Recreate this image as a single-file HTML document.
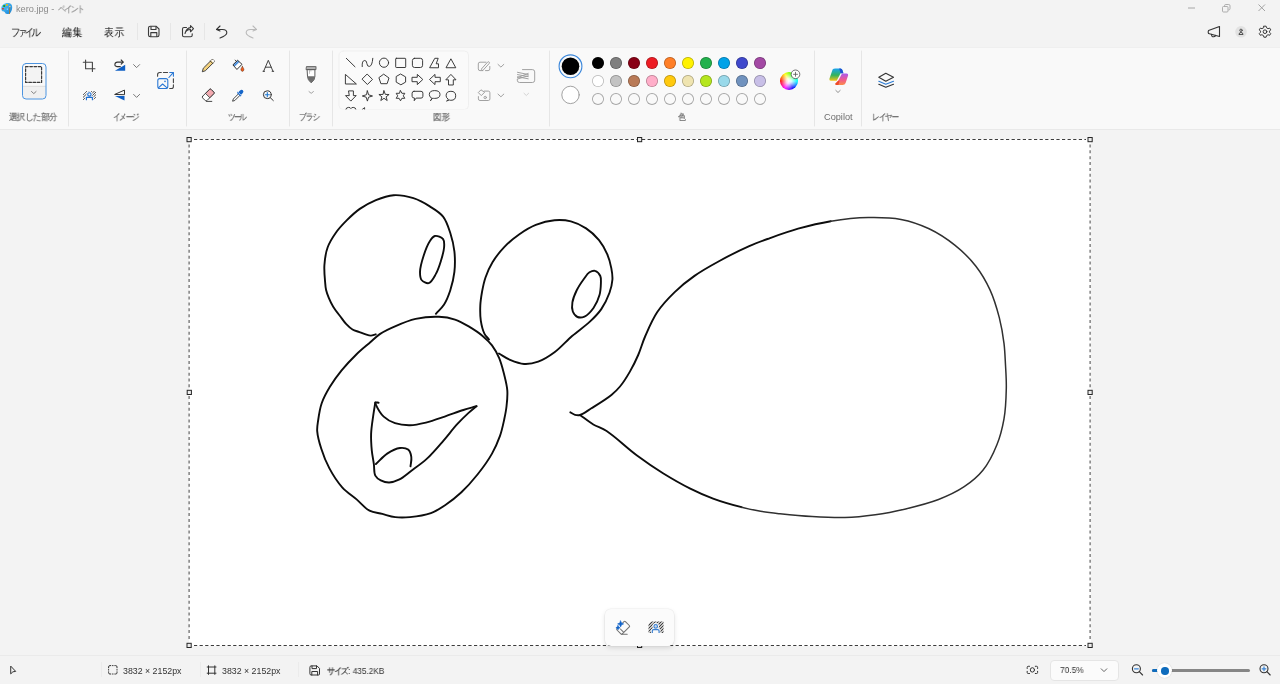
<!DOCTYPE html>
<html><head><meta charset="utf-8">
<style>
*{box-sizing:border-box}
html,body{margin:0;padding:0}
body{width:1280px;height:684px;overflow:hidden;position:relative;background:#f3f3f3;font-family:"Liberation Sans",sans-serif;color:#1b1b1b}
.a{position:absolute}
.t{position:absolute;white-space:nowrap;line-height:1;will-change:transform}
svg{position:absolute;overflow:visible}
#ribbon{position:absolute;left:0;top:47px;width:1280px;height:83px;background:#f9f9f9;border-top:1px solid #efefef;border-bottom:1px solid #e9e9e9}
.sep{position:absolute;width:1px;background:#ebebeb}
.lbl{position:absolute;white-space:nowrap;line-height:1;font-size:8.5px;color:#6e6e6e;will-change:transform}
.menu{position:absolute;white-space:nowrap;line-height:1;font-size:10.5px;color:#1f1f1f}
.sw{position:absolute;width:12px;height:12px;border-radius:50%;box-shadow:inset 0 0 0 0.8px rgba(0,0,0,.28)}
.stxt{position:absolute;white-space:nowrap;line-height:1;font-size:8.8px;color:#333;will-change:transform}
</style></head><body>

<!-- title bar -->
<svg style="left:0;top:0" width="16" height="16" viewBox="0 0 16 16">
  <defs><linearGradient id="pal" x1="0" y1="0" x2="1" y2="1"><stop offset="0" stop-color="#5ccaf7"/><stop offset="1" stop-color="#1583dc"/></linearGradient></defs>
  <path d="M1.3,9 C1,5.3 4,2.9 7.8,2.9 C11,2.9 12.3,5 12.2,7.5 C12.1,10 11.2,11.8 10.2,13 C9.2,14.1 7.6,14.1 6.2,13.8 C5,13.5 5.3,12.3 4.6,11.9 C3.6,11.4 1.6,11.6 1.3,9Z" fill="url(#pal)"/>
  <rect x="3.2" y="5" width="1.9" height="1.9" rx="0.5" fill="#1f9a2a"/>
  <rect x="6" y="3.9" width="1.8" height="1.8" rx="0.5" fill="#f5b800"/>
  <rect x="2" y="7.9" width="1.9" height="1.7" rx="0.5" fill="#d9381e"/>
  <circle cx="7.3" cy="9.1" r="0.7" fill="#cfe9fb"/>
  <path d="M9.75,7.2 L9.5,14" stroke="#a8772f" stroke-width="0.9"/>
  <ellipse cx="9.8" cy="6.6" rx="0.9" ry="0.6" fill="#f2c48a"/>
</svg>

<div class="t" style="left:16px;top:5px;font-size:9.2px;color:#8b8b8b">kero.jpg -</div>
<!-- window controls -->
<svg style="left:1186px;top:4px" width="10" height="8"><path d="M2,4 H9" stroke="#a6a6a6" stroke-width="1"/></svg>
<svg style="left:1222px;top:4px" width="10" height="9"><rect x="0.5" y="2.5" width="5.5" height="5.5" rx="1" fill="none" stroke="#a6a6a6" stroke-width="0.9"/><path d="M2.5,2.5 V1.8 Q2.5,0.5 3.8,0.5 H6.7 Q8,0.5 8,1.8 V4.6 Q8,6 6.5,6" fill="none" stroke="#a6a6a6" stroke-width="0.9"/></svg>
<svg style="left:1258px;top:4px" width="8" height="8"><path d="M0.5,0.5 L7,7 M7,0.5 L0.5,7" stroke="#9a9a9a" stroke-width="0.9"/></svg>

<!-- menu bar -->
<div class="sep" style="left:137px;top:23px;height:17px;background:#e6e6e6"></div>
<div class="sep" style="left:170px;top:23px;height:17px;background:#e6e6e6"></div>
<div class="sep" style="left:204px;top:23px;height:17px;background:#e6e6e6"></div>

<div id="ribbon"></div>


<!-- ribbon icons overlay -->
<svg style="left:0;top:0" width="1280" height="684" fill="none" stroke-linecap="round" stroke-linejoin="round">
  <!-- separators -->
  <g stroke="#e6e6e6" stroke-width="1">
    <path d="M68.5,51 V126"/><path d="M186.5,51 V126"/><path d="M289.5,51 V126"/><path d="M332.5,51 V126"/>
    <path d="M549.5,51 V126"/><path d="M814.5,51 V126"/><path d="M861.5,51 V126"/>
  </g>
  <!-- toolbar: save -->
  <g stroke="#3a3a3a" stroke-width="1.1">
    <path d="M148.5,28 Q148.5,26.2 150.3,26.2 H156 L159,29 V35 Q159,36.7 157.3,36.7 H150.3 Q148.5,36.7 148.5,35Z"/>
    <path d="M151,26.5 V29.5 H156 V26.5"/>
    <path d="M150.8,36.5 V32.6 H156.8 V36.5"/>
  </g>
  <!-- share -->
  <g stroke="#3a3a3a" stroke-width="1.1">
    <path d="M186.5,27.5 H184 Q182.5,27.5 182.5,29 V35.2 Q182.5,36.7 184,36.7 H190.7 Q192.2,36.7 192.2,35.2 V33.8"/>
    <path d="M185,33.5 Q186,29.5 190.5,29.5 V31.8 L193.5,28.6 L190.5,25.6 V27.6 Q186.5,27.8 185,33.5Z"/>
  </g>
  <!-- undo -->
  <g stroke="#333" stroke-width="1.1">
    <path d="M216.5,29.5 L220,26 M216.5,29.5 L220,31"/>
    <path d="M216.8,29.5 H222.5 Q227,29.5 226.8,33 Q226.5,35.5 220,38"/>
  </g>
  <!-- redo -->
  <g stroke="#b9b9b9" stroke-width="1.1">
    <path d="M256.5,29.5 L253,26 M256.5,29.5 L253,31"/>
    <path d="M256.2,29.5 H250.5 Q246,29.5 246.2,33 Q246.5,35.5 253,38"/>
  </g>
  <!-- title right icons -->
  <g stroke="#333" stroke-width="1.1">
    <path d="M1208.5,30.5 L1219.5,26.5 V36.5 L1208.5,33.5 Q1207.8,31.8 1208.5,30.5Z"/>
    <path d="M1211.5,34.3 Q1211.5,37 1213.8,36.8 Q1215.6,36.6 1215.5,35.3"/>
  </g>
  <circle cx="1241" cy="31.8" r="5.8" fill="#e2e2e2"/>
  <g stroke="#444" stroke-width="0.9"><circle cx="1241" cy="30.3" r="1.2"/><path d="M1239,34.1 Q1239.2,32.4 1241,32.4 Q1242.8,32.4 1243,34.1Z"/></g>
  <g stroke="#333" stroke-width="1.05" transform="translate(1265,31.7) scale(0.92)">
    <path d="M-1.2,-6 H1.2 L1.7,-4.2 L3.3,-3.3 L5.1,-3.9 L6.2,-2 L4.9,-0.6 V0.6 L6.2,2 L5.1,3.9 L3.3,3.3 L1.7,4.2 L1.2,6 H-1.2 L-1.7,4.2 L-3.3,3.3 L-5.1,3.9 L-6.2,2 L-4.9,0.6 V-0.6 L-6.2,-2 L-5.1,-3.9 L-3.3,-3.3 L-1.7,-4.2Z"/>
    <circle r="2"/>
  </g>

  <!-- selection button -->
  <rect x="22.5" y="63.5" width="23.5" height="35.5" rx="3.5" fill="#f9f9f9"/>
  <path d="M23,86.5 H45.5 V95 Q45.5,98.5 42,98.5 H26.5 Q23,98.5 23,95Z" fill="#f0f0f0"/>
  <path d="M23,86.3 H45.5" stroke="#d6d6d6" stroke-width="0.8"/>
  <rect x="25.6" y="66.6" width="16" height="15.8" fill="#f3f3f3" stroke="#3a3a3a" stroke-width="1.2" stroke-dasharray="2.6 1.6"/>
  <path d="M31.5,91.5 L33.8,93.6 L36.1,91.5" stroke="#666" stroke-width="0.8"/>
  <rect x="22.5" y="63.5" width="23.5" height="35.5" rx="3.5" stroke="#4b93df" stroke-width="1"/>

  <!-- crop -->
  <g stroke="#444" stroke-width="1.1">
    <path d="M85.6,60 V68.8 H95"/><path d="M83.3,62.2 H92.4 V71.5"/>
  </g>
  <!-- rotate -->
  <path d="M114.9,70.8 L125.2,64.8 V70.8Z" fill="#0f5fc4"/>
  <g stroke="#333" stroke-width="1.1">
    <path d="M120.3,66.6 H117 Q114.7,66.4 114.9,64.2 Q115.1,62.1 117.5,62.1 H123"/>
    <path d="M121.2,60 L123.2,62.1 L121.2,64.2"/>
  </g>
  <path d="M133.6,64.6 L136.6,67.6 L139.6,64.6" stroke="#6a6a6a" stroke-width="0.9"/>
  <!-- remove background -->
  <defs><clipPath id="rbc"><rect x="83" y="91" width="13" height="9"/></clipPath><clipPath id="rbc2"><rect x="648.5" y="621.5" width="15" height="11.5"/></clipPath></defs>
  <g clip-path="url(#rbc)" stroke="#4a4a4a" stroke-width="0.95" stroke-dasharray="1.1 0.5">
    <path d="M80,98 L89,89 M80,100.5 L91.5,89 M80,103 L94,89 M82.5,103 L96.5,89 M85,103 L99,89 M87.5,103 L101.5,89 M90,103 L104,89"/>
  </g>
  <g stroke="#f9f9f9" stroke-width="2.6" stroke-linecap="butt"><circle cx="89.4" cy="94.4" r="1.8"/><path d="M86.4,100.5 V97.4 H92.4 V100.5"/></g>
  <path d="M87,100 V98 H91.8 V100Z" fill="#f9f9f9"/>
  <g stroke="#1f6fd0" stroke-width="1.1" stroke-linecap="butt"><circle cx="89.4" cy="94.4" r="1.7"/><path d="M86.4,100.2 V97.4 H92.4 V100.2"/></g>
  <!-- flip -->
  <path d="M115,94.3 L124.5,90.1 V94.3Z" stroke="#333" stroke-width="1"/>
  <path d="M115,95.9 H124.5 V100.6Z" fill="#0f5fc4"/>
  <path d="M133.6,94.4 L136.6,97.4 L139.6,94.4" stroke="#6a6a6a" stroke-width="0.9"/>
  <!-- resize -->
  <rect x="157.8" y="78.6" width="10" height="9.9" rx="2" stroke="#2b78d4" stroke-width="1.1"/>
  <path d="M158.6,87.6 L162.6,84 L166.5,87.3" stroke="#2b78d4" stroke-width="1.1"/>
  <circle cx="165" cy="81.4" r="0.8" fill="#2b78d4"/>
  <g stroke="#444" stroke-width="1.1">
    <path d="M157.6,76.3 V74.6 Q157.6,72.5 159.7,72.5 H161.3"/><path d="M163.4,72.5 H167.6"/>
    <path d="M173.4,78.8 V82.6"/><path d="M173.4,84.7 V86.4 Q173.4,88.5 171.3,88.5 H169.7"/>
  </g>
  <g stroke="#2b78d4" stroke-width="1.1"><path d="M168.9,77.5 L173.2,72.7"/><path d="M169.7,72.5 H173.4 V76.2"/></g>

  <!-- pencil -->
  <g stroke="#333" stroke-width="0.9">
    <path d="M202.4,71.4 L203.3,68.2 L211.5,60 Q212.6,59 213.7,60.1 Q214.8,61.2 213.8,62.3 L205.6,70.5Z" fill="#f4d27e"/>
    <path d="M210.4,61.1 L212.7,63.4"/>
  </g>
  <path d="M211,60.5 Q212.6,59 213.7,60.1 Q214.8,61.2 213.3,62.8Z" fill="#fff"/>
  <!-- fill bucket -->
  <path d="M233.2,64.6 L237.6,60.3 L242,64.3 L237.2,69.2Z" fill="#fff"/>
  <path d="M233.2,64.6 L237.6,60.3 L239.5,62 L234.9,66.5Z" fill="#3f86d8"/>
  <path d="M234.4,64.6 L237.8,61.3 M235.6,65.4 L238.6,62.4" stroke="#a9cdf3" stroke-width="0.5" stroke-dasharray="0.8 0.6"/>
  <path d="M233.2,64.6 L237.6,60.3 L242,64.3 L237.2,69.2Z" stroke="#2a2a2a" stroke-width="0.95"/>
  <path d="M235.2,60.1 L236.3,61.3" stroke="#2a2a2a" stroke-width="0.9"/>
  <path d="M242.4,66.4 Q244,68.6 243.9,69.6 Q243.7,71.4 242.4,71.4 Q241.1,71.4 240.9,69.6 Q240.8,68.6 242.4,66.4Z" fill="#f05a1a" stroke="#5a2a10" stroke-width="0.5"/>
  <!-- text A -->
  <g stroke="#2e2e2e" stroke-width="0.9">
    <path d="M263.7,71.1 L268.3,60.3 L272.9,71.1"/><path d="M265.5,67.2 H271.1"/>
    <path d="M263,71.3 H264.6 M272.1,71.3 H273.7"/>
  </g>
  <!-- eraser -->
  <g stroke="#333" stroke-width="0.9">
    <path d="M202.6,96.3 L209.5,89.4 Q210.3,88.6 211.1,89.4 L213.8,92.1 Q214.6,92.9 213.8,93.7 L206.9,100.6 Q206.1,101.4 205.3,100.6 L202.6,97.9 Q201.8,97.1 202.6,96.3Z" fill="#fff"/>
    <path d="M205.8,93.1 L209.5,89.4 Q210.3,88.6 211.1,89.4 L213.8,92.1 Q214.6,92.9 213.8,93.7 L210.1,97.4Z" fill="#f3aab0"/>
    <path d="M206.5,101.4 H211.8"/>
  </g>
  <!-- color picker -->
  <g stroke="#333" stroke-width="0.9">
    <path d="M238.6,93.7 L233.3,99 L232.6,101.2 L234.8,100.5 L240.1,95.2" fill="#fff"/>
  </g>
  <path d="M237.2,93.2 L240.6,96.6 L241.6,95.6 L240.9,94.9 L242.6,93.2 Q244.2,91.6 242.9,90.3 Q241.6,89 240,90.6 L238.3,92.3 L237.6,91.6 Z" fill="#1565c8"/>
  <path d="M238.6,92.8 L241.1,95.3" stroke="#fff" stroke-width="0.7"/>
  <!-- zoom -->
  <g stroke="#333" stroke-width="1">
    <circle cx="267.3" cy="94.7" r="3.9"/><path d="M270.2,97.6 L273.3,100.6"/>
  </g>
  <path d="M267.3,92.6 V96.8 M265.2,94.7 H269.4" stroke="#1f78d1" stroke-width="1.1"/>
  <!-- brush -->
  <path d="M307.5,69.6 H314.9 V76.5 Q314.9,80 311.2,82.8 Q307.5,80 307.5,76.5Z" fill="#fff" stroke="#4a4a4a" stroke-width="0.9"/>
  <path d="M307.5,76.2 H314.9 V76.8 Q314.9,80 311.2,82.8 Q307.5,80 307.5,76.8Z" fill="#6e6e6e"/>
  <path d="M306.4,66.5 Q306.4,66.2 306.8,66.6 H315.6 Q316,66.2 316,66.5 V69.6 H306.4Z" fill="#b5b5b5" stroke="#4a4a4a" stroke-width="0.8"/>
  <path d="M309.5,70.6 V73.4 M309.5,70.8 H311.2" stroke="#9a9a9a" stroke-width="0.6"/>
  <path d="M309,91.6 L311.2,93.3 L313.4,91.6" stroke="#8a8a8a" stroke-width="0.8"/>

  <!-- shapes panel -->
  <rect x="339" y="51" width="129.5" height="58.5" rx="4" fill="#fafafa" stroke="#efefef" stroke-width="1"/>
  <g stroke="#333" stroke-width="0.95">
    <path d="M346.3,58.3 L355,66.8"/>
    <path d="M362.2,66.6 Q361.8,60.5 364.7,60.5 Q366.7,60.5 366.9,63.6 Q367.2,66.7 369.4,66.4 Q372.2,66 372.8,58.3"/>
    <circle cx="384" cy="62.7" r="4.6"/>
    <rect x="395.7" y="58.3" width="10" height="9.2" rx="0.6"/>
    <rect x="412.4" y="58.3" width="10.2" height="9.2" rx="2.2"/>
    <path d="M429.8,67.4 L434.8,58.3 H438.2 L436.2,63.8 H438.5 V67.4Z"/>
    <path d="M446.2,67.4 L450.9,58.8 L455.6,67.4Z"/>
    <path d="M345.4,74.8 V84 H356Z"/>
    <path d="M367.4,74.3 L372.5,79.4 L367.4,84.5 L362.3,79.4Z"/>
    <path d="M384,74.4 L389,78 L387.1,83.7 H380.9 L379,78Z"/>
    <path d="M400.9,74.2 L405.6,76.9 V82.1 L400.9,84.8 L396.2,82.1 V76.9Z"/>
    <path d="M412.4,77.3 H417.3 V74.4 L422.8,79.5 L417.3,84.6 V81.7 H412.4Z"/>
    <path d="M439.9,77.3 H435 V74.4 L429.5,79.5 L435,84.6 V81.7 H439.9Z"/>
    <path d="M448.5,84.6 V79.8 H445.8 L450.9,74.4 L456,79.8 H453.3 V84.6Z"/>
    <path d="M348.9,90.9 H353.4 V95.6 H356.2 L350.8,101.1 L345.5,95.6 H348.9Z"/>
    <path d="M367.4,90.9 L368.6,94.8 L372.5,96 L368.6,97.2 L367.4,101.1 L366.2,97.2 L362.3,96 L366.2,94.8Z"/>
    <path d="M384,90.8 L385.3,94.4 L389.1,94.5 L386.1,96.8 L387.2,100.5 L384,98.3 L380.8,100.5 L381.9,96.8 L378.9,94.5 L382.7,94.4Z"/>
    <path d="M400.5,90.7 L401.9,93.3 L404.8,93.3 L403.3,95.8 L404.8,98.3 L401.9,98.3 L400.5,100.8 L399.1,98.3 L396.2,98.3 L397.7,95.8 L396.2,93.3 L399.1,93.3Z"/>
    <path d="M414,91.3 H421 Q422.9,91.3 422.9,93.2 V96.3 Q422.9,98.1 421,98.1 H416.2 L414.2,100.7 L414.6,98.1 Q412.1,98.1 412.1,96.3 V93.2 Q412.1,91.3 414,91.3Z"/>
    <path d="M431.6,98.2 Q429.3,97 429.3,94.6 Q429.3,90.6 434.7,90.6 Q440,90.6 440,94.5 Q440,98.4 434.7,98.4 Q433.4,98.4 432.6,98.2 L430.7,100.5Z"/>
    <path d="M448.1,99.2 Q446.1,97.8 446.1,95.8 Q446.1,91.3 450.9,91.3 Q455.7,91.3 455.7,95.8 Q455.7,100.3 450.9,100.3 Q450,100.3 449.3,100 L446.9,100.9Z"/>
    <path d="M345.8,109.5 Q346,107.4 348.6,107.4 Q350.4,107.4 350.9,108.6 Q351.4,107.4 353.2,107.4 Q355.8,107.4 356,109.5"/>
    <path d="M362.2,109.5 L364.6,107.6 V109.5"/>
  </g>
  <rect x="339" y="109.5" width="129.5" height="2" fill="#f9f9f9"/>
  <!-- shape outline/fill/size -->
  <g stroke="#9c9c9c" stroke-width="0.95">
    <path d="M486,62.2 H480 Q478.3,62.2 478.3,63.9 V68.9 Q478.3,70.6 480,70.6 H482.8"/>
    <path d="M482.9,70.4 L489.1,63.6 Q489.9,62.7 489.1,62 Q488.4,61.3 487.5,62.2 L481.6,68.8 Z"/>
    <path d="M489.8,66.5 V68.9 Q489.8,70.6 488.1,70.6 H485.5"/>
    <path d="M498,64.4 L500.9,67.1 L503.8,64.4"/>
    <path d="M484.2,91.1 H488.3 Q489.9,91.1 489.9,92.7 V98.9 Q489.9,100.5 488.3,100.5 H480 Q478.4,100.5 478.4,98.9 V96.6"/>
    <path d="M480.7,90.1 L478.3,92.6 L481.3,95.6 L484.3,92.6Z"/>
    <circle cx="485.2" cy="97.5" r="1.2"/>
    <path d="M498,94.1 L500.9,96.8 L503.8,94.1"/>
    <path d="M522.5,69.6 H532.4 Q534.7,69.6 534.7,71.9 V80.2 Q534.7,82.5 532.4,82.5 H519.6 Q517.3,82.5 517.3,80.2 V79.5"/>
    <path d="M517.5,72.3 L528.2,74.5 M517.5,74.6 L528.2,76.6 M517.5,76.8 L528.2,78.8 M517.5,77.6 L528.2,73.4 M517.5,79 L528.2,75.8"/>
  </g>
  <path d="M524,93.3 L526.3,95.5 L528.6,93.3" stroke="#cfcfcf" stroke-width="0.9"/>

  <!-- current colors -->
  <circle cx="570.5" cy="66.3" r="11.4" stroke="#3b87db" stroke-width="1.1"/>
  <circle cx="570.5" cy="66.3" r="8.8" fill="#000"/>
  <circle cx="570.5" cy="94.9" r="8.7" fill="#fff" stroke="#8a8a8a" stroke-width="0.8"/>

  <!-- layers -->
  <g stroke="#333" stroke-width="1.1">
    <path d="M878.8,77.3 L885.8,73.3 L893.5,77.3 L885.8,81.3Z"/>
    <path d="M878.8,84.2 L885.8,87.3 L893.5,84.2"/>
  </g>
  <path d="M878.8,81.3 L885.8,84.3 L893.5,81.3" stroke="#2b7cd6" stroke-width="1.1"/>
  <path d="M835.8,90.4 L838,92.5 L840.2,90.4" stroke="#777" stroke-width="0.8"/>
</svg>


<!-- ribbon labels -->
<div class="lbl" style="left:823.5px;top:112.5px;font-size:9.2px">Copilot</div>
<!-- palette -->
<div class="sw" style="left:591.6px;top:56.5px;background:#000000"></div>
<div class="sw" style="left:591.6px;top:74.5px;background:#ffffff"></div>
<div class="sw" style="left:591.6px;top:92.5px;background:transparent;box-shadow:inset 0 0 0 0.9px #a8a8a8"></div>
<div class="sw" style="left:609.6px;top:56.5px;background:#7f7f7f"></div>
<div class="sw" style="left:609.6px;top:74.5px;background:#c3c3c3"></div>
<div class="sw" style="left:609.6px;top:92.5px;background:transparent;box-shadow:inset 0 0 0 0.9px #a8a8a8"></div>
<div class="sw" style="left:627.6px;top:56.5px;background:#880015"></div>
<div class="sw" style="left:627.6px;top:74.5px;background:#b97a57"></div>
<div class="sw" style="left:627.6px;top:92.5px;background:transparent;box-shadow:inset 0 0 0 0.9px #a8a8a8"></div>
<div class="sw" style="left:645.6px;top:56.5px;background:#ed1c24"></div>
<div class="sw" style="left:645.6px;top:74.5px;background:#ffaec9"></div>
<div class="sw" style="left:645.6px;top:92.5px;background:transparent;box-shadow:inset 0 0 0 0.9px #a8a8a8"></div>
<div class="sw" style="left:663.6px;top:56.5px;background:#ff7f27"></div>
<div class="sw" style="left:663.6px;top:74.5px;background:#ffc90e"></div>
<div class="sw" style="left:663.6px;top:92.5px;background:transparent;box-shadow:inset 0 0 0 0.9px #a8a8a8"></div>
<div class="sw" style="left:681.6px;top:56.5px;background:#fff200"></div>
<div class="sw" style="left:681.6px;top:74.5px;background:#efe4b0"></div>
<div class="sw" style="left:681.6px;top:92.5px;background:transparent;box-shadow:inset 0 0 0 0.9px #a8a8a8"></div>
<div class="sw" style="left:699.6px;top:56.5px;background:#22b14c"></div>
<div class="sw" style="left:699.6px;top:74.5px;background:#b5e61d"></div>
<div class="sw" style="left:699.6px;top:92.5px;background:transparent;box-shadow:inset 0 0 0 0.9px #a8a8a8"></div>
<div class="sw" style="left:717.6px;top:56.5px;background:#00a2e8"></div>
<div class="sw" style="left:717.6px;top:74.5px;background:#99d9ea"></div>
<div class="sw" style="left:717.6px;top:92.5px;background:transparent;box-shadow:inset 0 0 0 0.9px #a8a8a8"></div>
<div class="sw" style="left:735.6px;top:56.5px;background:#3f48cc"></div>
<div class="sw" style="left:735.6px;top:74.5px;background:#7092be"></div>
<div class="sw" style="left:735.6px;top:92.5px;background:transparent;box-shadow:inset 0 0 0 0.9px #a8a8a8"></div>
<div class="sw" style="left:753.6px;top:56.5px;background:#a349a4"></div>
<div class="sw" style="left:753.6px;top:74.5px;background:#c8bfe7"></div>
<div class="sw" style="left:753.6px;top:92.5px;background:transparent;box-shadow:inset 0 0 0 0.9px #a8a8a8"></div>
<div class="a" style="left:779.8px;top:72.3px;width:18px;height:18px;border-radius:50%;background:conic-gradient(from 30deg,#00ff00,#00ffff 60deg,#0000ff 120deg,#ff00ff 180deg,#ff0000 240deg,#ffff00 300deg,#00ff00 360deg)"></div>
<div class="a" style="left:779.8px;top:72.3px;width:18px;height:18px;border-radius:50%;background:radial-gradient(circle,#fff 0%,rgba(255,255,255,.85) 20%,rgba(255,255,255,0) 70%)"></div>
<svg style="left:790px;top:69px" width="12" height="12"><circle cx="5.5" cy="5.3" r="4.3" fill="#fff" stroke="#5a5a5a" stroke-width="0.85"/><path d="M5.5,2.9 V7.7 M3.1,5.3 H7.9" stroke="#555" stroke-width="0.8"/></svg>
<!-- copilot -->
<svg style="left:828.5px;top:67.5px" width="20" height="18" viewBox="0 0 20 18">
  <defs>
    <linearGradient id="cpA" x1="0" y1="0" x2="0" y2="1"><stop offset="0" stop-color="#19a4f2"/><stop offset=".55" stop-color="#34b35c"/><stop offset="1" stop-color="#f4c517"/></linearGradient>
    <linearGradient id="cpB" x1="0" y1="0" x2="0" y2="1"><stop offset="0" stop-color="#a85af0"/><stop offset=".55" stop-color="#f05a8e"/><stop offset="1" stop-color="#fc8c48"/></linearGradient>
  </defs>
  <path d="M3.6,1.6 Q4.4,0.4 6.4,0.4 H11.4 Q12.9,0.4 13.4,1.9 L14.4,5.2 H11.6 L7.7,12.8 H1.8 Q0,12.8 0.4,10.8 Z" fill="url(#cpA)"/>
  <path d="M10.2,0.4 H11.4 Q12.9,0.4 13.4,1.9 L14.4,5.2 H11.6Z" fill="#1d4fd2"/>
  <path d="M13,5.4 H17.6 Q19.6,5.4 19.1,7.6 L16.6,15 Q15.9,17 13.6,17 H7.6 Q6,17 6.5,15.4 L9.2,12.8 Z" fill="url(#cpB)"/>
  <path d="M9.2,12.8 H10.6 L9.4,17 H7.6 Q6,17 6.5,15.4 Z" fill="#ee4a2a"/>
</svg>

<div class="t" style="left:57.80px;top:5px;font-size:9.2px;color:#8b8b8b;-webkit-text-stroke:0.1px #8b8b8b;letter-spacing:-1.84px;transform:scaleX(0.9);transform-origin:0 0">ペイント</div>
<div class="t" style="left:10.60px;top:27px;font-size:10.5px;color:#1f1f1f;-webkit-text-stroke:0.08px #1f1f1f;letter-spacing:-3.06px;transform:scaleX(0.85);transform-origin:0 0">ファイル</div>
<div class="t" style="left:62.00px;top:27px;font-size:10.5px;color:#1f1f1f;-webkit-text-stroke:0.08px #1f1f1f;letter-spacing:0.57px;transform:scaleX(0.88);transform-origin:0 0">編集</div>
<div class="t" style="left:104.00px;top:27px;font-size:10.5px;color:#1f1f1f;-webkit-text-stroke:0.08px #1f1f1f;letter-spacing:1.14px;transform:scaleX(0.88);transform-origin:0 0">表示</div>
<div class="t" style="left:9.20px;top:113px;font-size:8.8px;color:#6a6a6a;-webkit-text-stroke:0.2px #6a6a6a;letter-spacing:-0.59px;transform:scaleX(0.95);transform-origin:0 0">選択した部分</div>
<div class="t" style="left:113.40px;top:113px;font-size:8.8px;color:#6a6a6a;-webkit-text-stroke:0.2px #6a6a6a;letter-spacing:-1.57px;transform:scaleX(0.85);transform-origin:0 0">イメージ</div>
<div class="t" style="left:228.20px;top:113px;font-size:8.8px;color:#6a6a6a;-webkit-text-stroke:0.2px #6a6a6a;letter-spacing:-2.35px;transform:scaleX(0.85);transform-origin:0 0">ツール</div>
<div class="t" style="left:299.40px;top:113px;font-size:8.8px;color:#6a6a6a;-webkit-text-stroke:0.2px #6a6a6a;letter-spacing:-1.06px;transform:scaleX(0.85);transform-origin:0 0">ブラシ</div>
<div class="t" style="left:433.00px;top:113px;font-size:8.8px;color:#6a6a6a;-webkit-text-stroke:0.2px #6a6a6a;letter-spacing:0.00px;transform:scaleX(0.95);transform-origin:0 0">図形</div>
<div class="t" style="left:677.60px;top:113px;font-size:8.8px;color:#6a6a6a;-webkit-text-stroke:0.2px #6a6a6a;letter-spacing:0.00px;transform:scaleX(0.86);transform-origin:0 0">色</div>
<div class="t" style="left:872.00px;top:113px;font-size:8.8px;color:#6a6a6a;-webkit-text-stroke:0.2px #6a6a6a;letter-spacing:-1.37px;transform:scaleX(0.85);transform-origin:0 0">レイヤー</div>
<div class="t" style="left:327.40px;top:667px;font-size:8.8px;color:#333;-webkit-text-stroke:0.15px #333;letter-spacing:-1.39px;transform:scaleX(0.9);transform-origin:0 0">サイズ</div>
<!-- canvas -->
<div class="a" style="left:189px;top:139px;width:902px;height:507px;background:#fff"></div>
<svg style="left:0;top:0" width="1280" height="684">
  <g fill="none" stroke="#0d0d0d" stroke-width="1.9" stroke-linecap="round" stroke-linejoin="round">
<path d="M375.7,334.3 C374.1,334.7 372.5,335.6 370.9,335.6 C369.4,335.6 368.1,335.2 366.5,334.7 C364.4,334.1 361.8,333.0 359.5,332.1 C357.2,331.2 354.7,330.8 352.5,329.5 C350.2,328.2 348.3,326.3 346.3,324.2 C344.1,321.9 342.3,319.1 340.2,316.3 C337.9,313.3 335.2,309.9 333.2,306.7 C331.4,303.8 330.0,300.8 328.8,297.9 C327.7,295.2 326.7,292.6 326.1,290.0 C325.5,287.6 325.4,285.8 325.2,282.9 C324.8,278.3 324.0,271.1 324.4,265.2 C324.8,259.3 325.6,253.0 327.6,247.5 C329.5,242.3 332.5,237.5 335.7,233.0 C338.9,228.4 342.9,224.2 346.9,220.2 C350.9,216.2 355.1,212.2 359.8,208.9 C364.7,205.5 370.3,202.4 375.9,200.1 C381.5,197.8 387.5,195.6 393.6,195.2 C400.0,194.8 407.3,196.3 413.4,198.2 C419.3,200.1 424.8,203.2 429.8,206.4 C434.6,209.4 439.7,212.3 443.1,216.6 C446.6,221.1 448.4,227.3 450.3,233.0 C452.2,238.9 453.7,245.1 454.4,251.4 C455.1,258.0 455.1,265.3 454.4,271.9 C453.7,278.2 452.1,284.6 450.3,290.3 C448.6,295.5 446.7,300.5 444.1,304.6 C441.8,308.2 438.6,310.7 435.9,313.8"/>
<path d="M434.9,236.0 C437.2,235.5 441.6,237.2 443.1,239.1 C444.6,241.0 444.3,244.3 444.1,247.3 C443.9,251.2 442.3,256.2 441.0,260.6 C439.6,265.1 438.1,270.0 435.9,273.9 C433.9,277.4 431.5,282.4 428.8,283.1 C426.6,283.7 423.1,281.8 421.6,280.0 C420.1,278.1 420.0,275.1 420.0,271.9 C420.1,267.4 422.0,260.7 423.7,255.5 C425.3,250.5 427.5,244.6 429.8,241.2 C431.4,238.8 432.8,236.5 434.9,236.0Z"/>
<path d="M489.0,339.5 C487.5,337.5 485.7,336.1 484.4,333.6 C482.7,330.3 481.5,325.2 480.8,320.7 C480.1,315.9 480.1,310.4 480.3,305.5 C480.5,300.9 481.2,296.6 482.0,292.0 C482.9,287.2 483.8,282.3 485.5,277.5 C487.3,272.4 489.5,267.2 492.5,262.3 C495.7,257.0 499.8,251.7 504.2,247.1 C508.7,242.4 514.1,237.9 519.4,234.2 C524.6,230.6 530.0,227.2 535.8,224.9 C541.7,222.5 548.4,220.7 554.5,220.2 C560.1,219.7 565.7,220.0 570.9,221.4 C576.2,222.8 581.5,225.3 586.1,228.4 C590.8,231.5 595.4,235.7 599.0,240.1 C602.4,244.3 605.1,249.3 607.2,254.1 C609.2,258.6 610.4,263.6 611.3,268.1 C612.1,272.1 612.7,275.8 612.4,279.8 C612.1,284.0 611.1,288.2 609.5,292.7 C607.6,297.9 604.7,304.2 601.3,309.1 C598.0,313.9 594.1,317.7 589.6,321.9 C584.5,326.7 577.9,331.0 572.1,336.0 C566.2,341.1 560.5,347.9 554.5,352.3 C549.2,356.2 543.6,359.8 538.2,361.7 C533.5,363.4 528.8,364.3 524.1,364.0 C519.4,363.7 514.4,361.7 510.1,359.9 C506.1,358.2 502.7,355.6 499.0,353.5"/>
<path d="M595.1,270.9 C597.0,271.4 599.3,273.9 600.3,276.0 C601.3,278.1 600.9,280.6 600.9,283.3 C600.8,286.8 600.6,291.2 599.5,295.1 C598.3,299.4 596.1,304.3 593.5,308.0 C591.0,311.4 587.6,315.3 584.5,316.6 C582.2,317.6 579.4,317.8 577.5,317.0 C575.5,316.2 573.7,313.7 572.8,311.5 C571.8,309.0 571.9,305.6 572.4,302.4 C573.0,298.6 574.7,294.4 576.6,290.5 C578.6,286.4 581.8,281.8 584.2,278.5 C586.0,276.0 587.5,273.5 589.5,272.3 C591.2,271.3 593.4,270.4 595.1,270.9Z"/>
<path d="M379.8,334.1 C384.3,331.1 389.9,328.5 395.6,326.1 C401.8,323.4 408.6,320.5 415.6,318.9 C423.0,317.3 431.9,316.5 438.9,316.8 C444.8,317.0 449.9,317.9 455.0,319.6 C460.1,321.3 464.9,324.2 469.5,326.9 C474.0,329.6 478.5,332.5 482.3,335.7 C485.9,338.7 489.2,341.7 492.0,345.4 C494.9,349.2 497.2,353.6 499.2,358.2 C501.3,363.2 502.7,368.9 504.1,374.3 C505.4,379.6 506.9,385.0 507.3,390.4 C507.7,395.7 507.1,401.4 506.5,406.5 C506.0,411.2 505.1,415.3 504.1,420.0 C503.0,425.1 501.9,430.5 500.0,435.9 C497.9,441.7 495.4,447.6 492.0,453.6 C488.1,460.5 482.7,468.0 477.5,474.5 C472.5,480.8 467.0,487.0 461.4,492.2 C456.2,497.0 450.8,501.4 445.4,505.0 C440.6,508.2 436.4,511.1 430.9,513.1 C424.7,515.3 416.4,516.5 410.0,517.1 C404.7,517.6 399.9,517.7 395.2,517.1 C390.7,516.6 386.6,515.0 382.3,513.9 C378.0,512.8 373.5,512.8 369.5,510.7 C364.9,508.3 361.0,503.2 356.6,499.4 C352.0,495.4 346.6,492.2 342.2,487.3 C337.4,481.9 332.8,474.7 329.3,468.1 C325.9,461.8 323.3,455.2 321.3,448.8 C319.4,442.9 317.6,436.3 317.2,431.1 C316.9,427.0 317.6,424.1 318.2,420.0 C318.9,415.0 319.8,408.6 321.7,403.2 C323.7,397.6 326.7,392.1 329.9,386.8 C333.3,381.2 337.3,375.7 341.6,370.4 C346.2,364.8 351.8,358.9 356.8,354.0 C361.2,349.7 365.9,346.0 370.0,342.5 C373.5,339.5 376.0,336.7 379.8,334.1Z"/>
<path d="M375.3,402.5 C374.6,406.9 373.9,411.0 373.2,415.8 C372.4,421.4 371.3,428.0 371.1,433.9 C370.9,439.6 371.3,445.3 371.8,450.6 C372.3,455.4 373.3,460.0 373.9,464.4 C374.4,468.3 373.8,472.8 375.3,475.6 C376.5,477.8 378.6,479.3 380.8,480.4 C383.2,481.6 386.3,482.6 389.2,482.5 C392.3,482.4 395.6,481.3 398.9,479.7 C403.0,477.7 407.1,473.9 411.4,470.7 C416.3,467.1 421.7,463.5 426.7,458.9 C432.3,453.7 438.1,446.8 443.3,440.8 C448.2,435.2 452.7,429.1 457.2,424.2 C461.0,420.0 464.8,416.3 468.3,413.1 C471.2,410.5 473.8,408.5 476.5,406.2"/>
<path d="M476.5,406.2 C472.1,407.5 468.1,408.5 463.4,410.0 C457.7,411.8 451.0,414.5 444.7,416.6 C438.5,418.7 432.0,421.1 425.9,422.6 C420.4,423.9 415.2,425.1 410.0,425.2 C404.9,425.3 399.5,424.6 395.0,423.1 C390.8,421.7 386.8,419.5 383.7,416.6 C380.5,413.6 377.4,407.9 376.2,405.3 C375.6,404.1 375.0,402.9 375.3,402.5 C375.7,402.0 377.5,402.6 378.6,402.7"/>
<path d="M375.9,464.0 C379.7,460.5 383.1,456.3 387.2,453.6 C391.1,451.0 396.2,448.4 400.0,448.0 C403.0,447.7 406.2,448.1 408.1,449.6 C409.9,451.1 410.9,454.2 411.3,456.8 C411.8,459.7 410.8,463.2 410.5,466.4"/>
<path d="M570.4,412.3 C571.9,413.1 573.4,414.4 575.0,414.8 C576.6,415.2 578.1,415.5 580.0,415.0 C583.1,414.2 587.1,411.0 591.4,408.3 C597.2,404.7 606.3,399.2 611.4,395.0 C615.0,392.0 617.2,389.9 620.0,386.5 C623.4,382.4 626.9,376.8 629.9,371.6 C633.0,366.3 635.7,360.8 638.2,355.0 C640.8,348.9 642.4,342.6 645.3,336.0 C648.6,328.4 652.4,319.3 657.3,312.0 C662.2,304.7 668.4,298.2 674.7,292.1 C680.9,286.1 687.3,280.9 694.5,275.9 C702.1,270.5 710.6,265.8 719.4,261.0 C728.8,255.8 740.1,250.1 749.2,246.1 C756.7,242.8 762.5,240.8 770.0,238.1 C778.6,235.0 788.3,231.5 798.1,228.7 C808.5,225.8 819.5,223.1 830.8,221.2"/>
<path d="M741.6,507.2 C733.0,505.0 722.0,501.9 713.1,498.6 C705.0,495.6 698.1,492.5 690.3,488.6 C681.5,484.2 671.9,478.7 663.0,473.2 C654.1,467.7 645.9,462.1 637.0,455.5 C627.1,448.2 614.9,436.3 606.6,431.0 C601.5,427.7 597.6,427.1 593.3,424.5 C588.8,421.8 584.4,418.2 580.0,415.0"/>
<path stroke="#303030" stroke-width="1.5" d="M830.8,221.2 C842.8,219.2 856.2,217.7 868.3,217.5 C879.6,217.3 890.6,217.4 901.0,219.4 C910.9,221.3 920.2,224.5 929.1,228.7 C938.1,233.0 947.0,238.8 954.8,245.1 C962.6,251.3 970.0,258.6 975.9,266.2 C981.6,273.5 986.0,281.2 989.9,289.6 C993.9,298.3 996.9,308.4 999.3,317.6 C1001.5,326.3 1003.0,335.2 1004.0,343.4 C1004.9,350.9 1005.1,357.7 1005.5,365.0 C1005.9,372.6 1006.5,380.1 1006.3,388.4 C1006.1,397.9 1005.7,409.2 1004.0,418.8 C1002.4,427.8 1000.4,436.1 997.0,444.5 C993.5,453.3 988.7,463.1 982.9,470.3 C977.6,476.9 971.3,482.0 964.2,486.7 C956.6,491.8 947.8,495.9 938.5,499.5 C928.4,503.4 916.5,506.3 905.7,508.9 C895.4,511.3 885.5,513.3 875.3,514.7 C865.2,516.1 855.2,517.2 844.9,517.5 C834.2,517.8 823.0,517.2 812.1,516.6 C801.3,516.0 789.4,514.8 780.0,513.8 C772.7,513.0 767.0,512.4 760.6,511.3 C754.2,510.2 748.5,509.0 741.6,507.2"/>
  </g>
  <g stroke="#3c3c3c" stroke-width="1.1" stroke-dasharray="3.2 2.4">
    <path d="M194,139.5 H1086"/>
    <path d="M194,645.5 H1086"/>
  </g>
  <g stroke="#555" stroke-width="1.1" stroke-dasharray="3 2.85">
    <path d="M189.1,144.5 V641"/>
    <path d="M1090.1,144.5 V641"/>
  </g>
  <g fill="#ececec" stroke="#262626" stroke-width="1">
    <rect x="187" y="137.5" width="4.2" height="4.2"/>
    <rect x="1088" y="137.5" width="4.2" height="4.2"/>
    <rect x="187" y="643.3" width="4.2" height="4.2"/>
    <rect x="1088" y="643.3" width="4.2" height="4.2"/>
    <rect x="637.5" y="137.5" width="4.2" height="4.2"/>
    <rect x="637.5" y="643.3" width="4.2" height="4.2"/>
    <rect x="187.2" y="390.3" width="4.2" height="4.2"/>
    <rect x="1088" y="390.3" width="4.2" height="4.2"/>
  </g>
</svg>

<!-- status bar -->
<div class="a" style="left:0;top:655px;width:1280px;height:1px;background:#eaeaea"></div>
<div class="sep" style="left:101px;top:662px;height:15px"></div>
<div class="sep" style="left:200px;top:662px;height:15px"></div>
<div class="sep" style="left:298px;top:662px;height:15px"></div>
<div class="stxt" style="left:123px;top:667px">3832 × 2152px</div>
<div class="stxt" style="left:222px;top:667px">3832 × 2152px</div>
<div class="a" style="left:1050px;top:660px;width:69px;height:21px;background:#fbfbfb;border:1px solid #e5e5e5;border-radius:4px"></div>
<div class="stxt" style="left:348px;top:667px;transform:scaleX(0.94);transform-origin:0 0">: 435.2KB</div>
<div class="stxt" style="left:1059.8px;top:665.6px;font-size:9.3px;transform:scaleX(0.9);transform-origin:0 0">70.5%</div>
<div class="a" style="left:1152px;top:669px;width:98px;height:3px;border-radius:2px;background:#868686"></div>
<div class="a" style="left:1152px;top:669px;width:10px;height:3px;border-radius:2px;background:#0f6cbd"></div>
<div class="a" style="left:1157px;top:663px;width:15px;height:15px;border-radius:50%;background:#fff;box-shadow:0 0 1px rgba(0,0,0,.25)"></div>
<div class="a" style="left:1161px;top:667px;width:7.5px;height:7.5px;border-radius:50%;background:#0f6cbd"></div>


<!-- status icons + floating toolbar -->
<div class="a" style="left:604.8px;top:609.4px;width:69.4px;height:36.6px;border-radius:6px;background:#fbfbfb;box-shadow:0 0 0 0.6px rgba(0,0,0,.06),0 2px 5px rgba(0,0,0,.12)"></div>
<svg style="left:0;top:0" width="1280" height="684" fill="none" stroke-linecap="round" stroke-linejoin="round">
  <path d="M11,666.4 L15.7,671.4 L12.9,671.8 L11,673.6Z" stroke="#333" stroke-width="1"/>
  <path d="M108.6,667.8 V666.9 Q108.6,665.6 109.9,665.6 H110.8 M114.8,665.6 H115.7 Q117,665.6 117,666.9 V667.8 M117,671.8 V672.7 Q117,674 115.7,674 H114.8 M110.8,674 H109.9 Q108.6,674 108.6,672.7 V671.8 M112.5,665.6 H113.1 M112.5,674 H113.1 M108.6,669.5 V670.1 M117,669.5 V670.1" stroke="#333" stroke-width="1"/>
  <g stroke="#333" stroke-width="1"><path d="M208.5,665.8 V674.4 M214.8,665.8 V674.4 M207.2,667 H216 M207.2,673.2 H216"/></g>
  <g stroke="#333" stroke-width="1">
    <path d="M309.9,667 Q309.9,665.9 311,665.9 H317 L319.5,668.4 V674 Q319.5,675 318.5,675 H311 Q309.9,675 309.9,674Z"/>
    <path d="M312,666 V668.6 H316.5 V666 M311.8,675 V671.5 H317.6 V675"/>
  </g>
  <g stroke="#333" stroke-width="1">
    <path d="M1027.2,668.5 V667.3 Q1027.2,666.3 1028.2,666.3 H1029.5 M1035.3,666.3 H1036.6 Q1037.6,666.3 1037.6,667.3 V668.5 M1037.6,671.3 V672.5 Q1037.6,673.5 1036.6,673.5 H1035.3 M1029.5,673.5 H1028.2 Q1027.2,673.5 1027.2,672.5 V671.3"/>
    <ellipse cx="1032.4" cy="669.9" rx="2.1" ry="2.2"/>
  </g>
  <path d="M1101.2,668.8 L1104,671.6 L1106.8,668.8" stroke="#555" stroke-width="0.9"/>
  <g stroke="#333" stroke-width="1.1"><circle cx="1136.4" cy="668.8" r="4"/><path d="M1139.3,671.7 L1142.6,675"/></g>
  <path d="M1134.5,668.8 H1138.3" stroke="#3a86d8" stroke-width="1.2"/>
  <g stroke="#333" stroke-width="1.1"><circle cx="1264" cy="668.8" r="4"/><path d="M1266.9,671.7 L1270.2,675"/></g>
  <path d="M1262.1,668.8 H1265.9 M1264,666.9 V670.7" stroke="#3a86d8" stroke-width="1.2"/>
  <!-- floating bar icons -->
  <g stroke="#707070" stroke-width="1.05">
    <path d="M622.6,623 L624,621.6 Q624.7,620.9 625.4,621.6 L629.3,625.5 Q630,626.2 629.3,626.9 L622.3,633.9 Q621.6,634.6 620.9,633.9 L617,630 Q616.3,629.3 617,628.6 L617.8,627.8"/>
    <path d="M620.4,629 L623.3,631.9"/>
    <path d="M621.8,634.3 H627.2"/>
  </g>
  <path d="M620.6,620.9 L621.5,623 L623.6,623.9 L621.5,624.8 L620.6,626.9 L619.7,624.8 L617.6,623.9 L619.7,623Z" fill="#0f62c8" stroke="#0f62c8" stroke-width="0.6"/>
  <path d="M618,625.6 L618.7,627 L620.1,627.7 L618.7,628.4 L618,629.8 L617.3,628.4 L615.9,627.7 L617.3,627Z" fill="#0f62c8" stroke="#0f62c8" stroke-width="0.6"/>
  <g clip-path="url(#rbc2)" stroke="#3a3a3a" stroke-width="1.1" stroke-linecap="butt">
    <path d="M646,628 L654,620 M646,631 L657,620 M646,634 L660,620 M649,634 L663,620 M652,634 L666,620 M655,634 L669,620 M658,634 L672,620 M661,634 L675,620"/>
  </g>
  <g stroke="#fbfbfb" stroke-width="2.8" stroke-linecap="butt"><circle cx="655.7" cy="626.4" r="1.9"/><path d="M652.3,633.5 V631 Q652.3,629.7 653.6,629.7 H657.8 Q659.1,629.7 659.1,631 V633.5"/></g>
  <path d="M653,633 V631 Q653,630.4 653.6,630.4 H657.8 Q658.4,630.4 658.4,631 V633Z" fill="#fbfbfb"/>
  <g stroke="#3a7fd0" stroke-width="1.2" stroke-linecap="butt"><circle cx="655.7" cy="626.4" r="1.75"/><path d="M652.3,633 V631 Q652.3,629.7 653.6,629.7 H657.8 Q659.1,629.7 659.1,631 V633"/></g>
</svg>

</body></html>
